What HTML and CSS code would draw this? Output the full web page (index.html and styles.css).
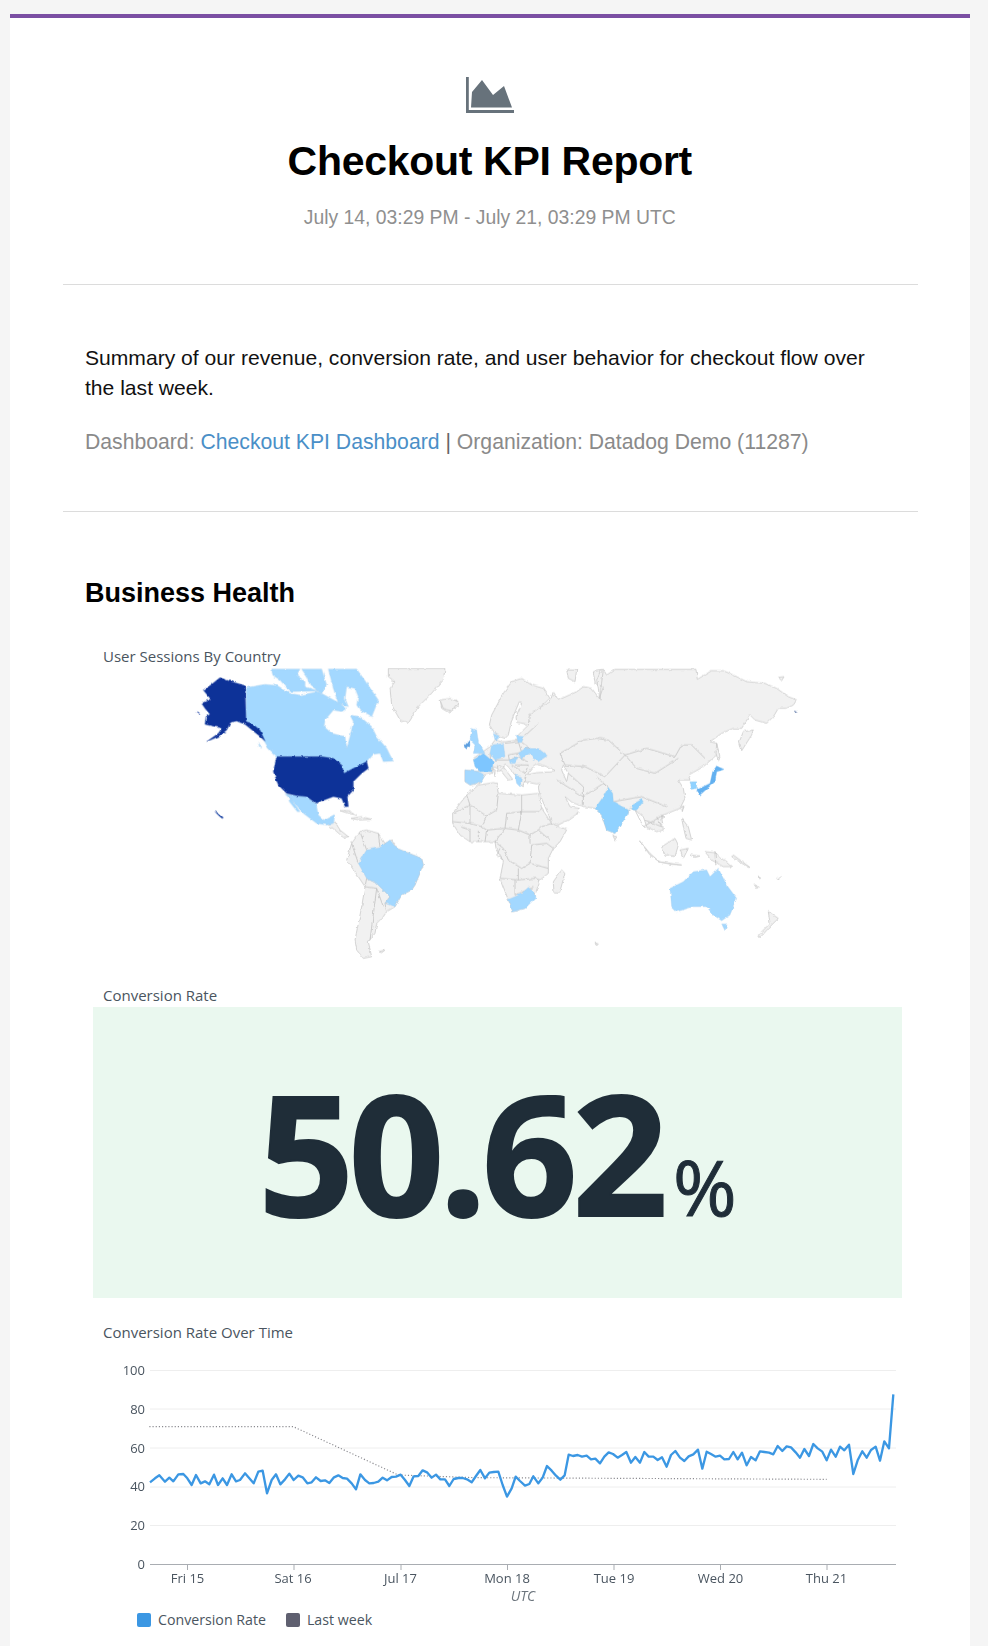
FILE: index.html
```html
<!DOCTYPE html>
<html lang="en">
<head>
<meta charset="utf-8">
<title>Checkout KPI Report</title>
<link rel="stylesheet" href="styles.css">
</head>
<body>
<main class="card">
  <header class="head">
    <svg class="logo" viewBox="0 0 48 36" aria-hidden="true">
      <path class="logo-fill" d="M5 30.500 L6 15 L16 3 L27 18 L38 9 L46 30.500 Z"/>
      <path class="logo-fill" d="M0 0 H2.800 V33 H48 V36 H0 Z"/>
    </svg>
    <h1 class="title">Checkout KPI Report</h1>
    <p class="range">July 14, 03:29 PM - July 21, 03:29 PM UTC</p>
  </header>
  <section class="intro">
    <p class="summary">Summary of our revenue, conversion rate, and user behavior for checkout flow over the last week.</p>
    <p class="meta">Dashboard: <a class="link" href="#">Checkout KPI Dashboard</a> <span class="pipe">|</span> Organization: Datadog Demo (11287)</p>
  </section>
  <section class="body">
    <h2 class="section-title">Business Health</h2>

    <h3 class="widget-title first">User Sessions By Country</h3>
    <svg class="map" viewBox="9 84 2430 876" role="img" aria-label="World map of user sessions by country">
      <defs>
        <filter id="rough" filterUnits="userSpaceOnUse" x="0" y="84" width="2440" height="880">
          <feTurbulence type="fractalNoise" baseFrequency="0.07" numOctaves="2" seed="4" result="noise"/>
          <feDisplacementMap in="SourceGraphic" in2="noise" scale="9" xChannelSelector="R" yChannelSelector="G"/>
        </filter>
      </defs>
      <g filter="url(#rough)">
      <g class="land">
        <path d="M895 85H1065L1060 120L1020 165L985 200L955 250L930 240L905 195L900 145L915 125L895 110Z"/>
        <path d="M1052 185L1075 186L1100 180L1105 200L1075 217L1055 205Z"/>
        <path d="M710 550L735 545L750 570L775 590L760 592L735 570Z"/>
        <path d="M750 512L775 512L800 525L775 520ZM780 535L815 530L845 538L810 540Z"/>
        <path d="M770 660L785 610L810 575L830 570L865 580L885 610L905 600L920 625L995 655L1000 675L975 735L965 750L935 765L915 800L890 815L880 830L860 850L855 880L835 905L845 950L820 955L800 930L795 900L815 800L825 740L805 710Z"/>
        <path d="M865 935L885 930L875 938Z"/>
      </g>
      <g class="lines">
        <path d="M785 610L805 670M810 575L830 630M865 580L870 622M885 610L875 622M830 715L825 740M830 715L860 730L875 745L900 770L885 790L890 815M825 740L860 745L840 900M860 745L880 800"/>
      </g>
      <g class="c-light">
        <path d="M805 670L830 630L870 622L900 600L920 625L995 655L1000 675L975 735L965 750L935 765L915 800L885 790L900 770L875 745L860 730L830 715Z"/>
      </g>
      <g transform="translate(300 75)">
        <g class="c-light">
          <path d="M168 68L225 58L262 62L300 85L330 90L385 80L440 110L470 130L455 140L430 135L405 165L402 185L425 205L465 215L470 250L480 215L490 170L480 150L510 155L545 185L560 215L590 250L600 270L610 288L580 290L570 265L550 268L530 292L505 305L462 325L455 300L430 280L395 275L260 275L235 250L210 205L188 178L168 170Z"/>
          <path d="M245 12H330L320 30L345 50L345 65L385 78L300 80L270 45L248 30Z"/>
          <path d="M335 12H395L410 60L395 85L360 60L350 35Z"/>
          <path d="M415 12H500L520 40L565 105L545 155L510 135L500 120L505 95L495 70L470 65L465 100L475 125L445 115L430 70Z"/>
          <path d="M285 387L320 392L350 395L378 417L385 450L402 465L435 448L430 475L410 480L380 475L340 445L310 410ZM295 390L330 440L322 440L298 410Z"/>
          <path d="M205 230L215 250L208 245Z"/>
        </g>
        <g class="c-dark">
          <path d="M90 38L112 46L165 62L168 170L185 175L210 195L225 228L205 210L180 190L165 178L140 168L122 172L110 195L85 215L50 230L85 205L95 190L75 185L45 178L48 155L60 148L45 130L35 115L55 105L62 102L40 75L62 60Z"/>
          <path d="M260 275L395 275L430 280L455 300L462 325L500 305L530 290L535 310L515 325L505 335L490 350L490 375L472 395L475 425L465 425L455 400L430 395L390 410L378 415L350 395L320 392L290 385L265 360L250 320Z"/>
          <path d="M75 440L85 445L100 458L96 460L85 450ZM22 140L30 146L25 147Z"/>
        </g>
      </g>
      <g transform="translate(1050 0)">
        <g class="land">
          <path d="M148 255L155 225L190 160L215 125L245 115L275 135L310 145L330 175L302 200L280 245L265 253L230 247L228 230L245 190L238 185L215 240L205 285L195 295L180 290L165 280Z"/>
          <path d="M265 255L268 225L295 205L330 185L340 155L355 180L410 155L430 140L455 145L478 175L490 140L465 130L460 95L490 88L500 105L525 88L768 88L772 118L815 92L850 92L880 105L920 125L975 130L1010 145L1045 170L1070 180L1060 195L1040 205L1015 205L1000 230L980 250L945 240L930 225L905 265L880 265L845 280L810 305L830 310L835 340L790 380L755 400L745 405L750 420L715 420L730 445L735 475L720 505L670 525L665 530L670 570L650 575L620 560L610 530L585 510L570 505L565 515L525 580L500 570L485 525L465 505L435 500L400 490L375 470L390 500L418 505L410 522L385 540L340 562L328 530L300 465L295 440L300 430L290 432L255 425L258 405L290 398L345 395L335 385L315 378L295 372L280 380L268 395L255 415L250 440L235 432L225 405L205 380L195 372L190 380L218 418L205 420L178 387L160 380L155 400L135 405L120 430L90 435L75 425L75 390L115 395L100 355L150 320L165 300L185 305L195 305L235 300L235 285Z"/>
          <path d="M370 375L385 400L380 425L365 390Z" class="sea"/>
          <path d="M470 120L480 95L490 90L484 135L480 180L475 145Z"/>
          <path d="M380 90H410L405 125L385 115Z"/>
          <path d="M1015 112L1032 110L1025 122Z"/>
          <path d="M0 180L30 175L55 185L35 213L10 205Z"/>
          <path d="M172 375L190 385L175 395ZM160 385L170 395L165 410Z"/>
          <path d="M985 815L1015 835L990 860L960 893L955 885L990 850Z"/>
          <path d="M465 910L475 912L470 917Z"/>
        </g>
        <g transform="translate(30 420)">
          <g class="land">
            <path d="M8 100L30 70L50 45L85 15L130 8L140 10L145 40L215 45L265 40L275 85L305 130L350 150L330 185L310 205L295 235L295 280L270 300L255 345L225 385L190 395L175 360L150 295L160 245L138 205L135 185L100 185L60 185L30 165L8 130Z"/>
            <path d="M335 270L345 280L328 340L312 338L310 305Z"/>
          </g>
          <path class="borders" d="M50 45L60 75M8 100L60 75L110 108L140 90L145 40M215 45L215 95L265 95L275 85M60 75L60 130L8 125M60 130L95 140L110 108M95 140L110 150L165 145L170 100L215 95L205 150L240 165L265 150L300 180M265 150L275 140L305 130M205 150L165 145L135 185L160 205L175 240M240 190L240 165M175 240L215 265L240 250L245 195L290 190L310 205M240 250L295 265M205 265L205 300L150 295M205 300L255 295M195 300L195 345L250 322M60 185L60 150M85 185L85 150M110 150L105 185M150 205L140 225L160 240M30 140L60 150M255 295L270 300"/>
          <path class="za" d="M175 358L195 350L215 340L235 322L255 338L258 352L225 385L190 395Z"/>
        </g>
        <g transform="translate(480 270)">
          <g class="land">
            <path d="M460 0L455 15L425 62L418 35L430 5Z"/>
            <path d="M350 40L360 80L355 95L348 70Z"/>
            <path d="M245 230L252 228L247 245Z"/>
            <path d="M245 265L265 290L275 330L258 325L250 290Z"/>
            <path d="M185 350L225 325L235 345L225 380L195 375Z"/>
            <path d="M240 360L265 355L250 385Z"/>
            <path d="M315 365L345 368L395 410L370 410L335 390Z"/>
            <path d="M118 332L150 370L178 395L150 375Z"/>
            <path d="M175 395L245 405L215 403Z"/>
            <path d="M400 375L450 412L445 412L395 380ZM270 375L300 378L285 382ZM475 435L482 445L478 446ZM530 445L544 438L534 448ZM462 462L475 472L470 475Z"/>
            <path d="M38 315L50 320L45 330Z"/>
            <path d="M185 255L195 258L188 265Z"/>
          </g>
          <path class="borders" d="M-120 70L-50 30L-10 25L25 30L75 75L140 55L225 80L245 45L275 45L315 85M75 75L110 115L165 130L235 85M75 75L15 140L-45 110L-105 105L-120 70M-95 130L-50 170L-50 225M-130 150L-50 200L10 160L25 172M-10 140L20 170M105 240L130 290L190 255M130 290L150 300M135 270L185 290L170 260M40 215L125 200L200 230M345 368L347 402"/>
          <g class="c-mid">
            <path d="M25 172L38 190L40 215L85 240L85 250L45 310L20 300L5 255L-15 235L10 200Z"/>
            <path d="M95 225L125 208L130 215L110 240L100 240Z"/>
            <path d="M270 155L290 155L290 175L275 178Z"/>
          </g>
          <path class="c-japan" d="M350 108L372 118L350 125L345 155L300 195L290 180L330 160L338 125Z"/>
        </g>
        <g transform="translate(30 75)">
          <path class="borders" d="M165 235L205 230L215 262L175 270M135 285L178 285L205 275L235 290M175 270L178 285M120 265L125 320M195 300L235 300L225 325M205 230L215 215M222 215L265 175M215 232L240 250L225 250M185 300L225 325"/>
          <g class="c-light">
            <path d="M65 190L80 195L85 230L105 265L70 265L75 240L60 225Z"/>
            <path d="M45 315L85 320L105 330L95 350L60 360L45 350Z"/>
            <path d="M125 240L160 235L165 275L135 285L120 265Z"/>
            <path d="M130 205L150 215L135 225Z"/>
            <path d="M205 265L225 250L265 250L292 272L265 290L250 280L240 265L215 280Z"/>
            <path d="M178 285L205 275L195 295L180 295Z"/>
            <path d="M195 330L215 335L210 365L200 355Z"/>
            <path d="M198 212L222 215L215 232L205 232Z"/>
          </g>
          <path class="c-france" d="M70 285L100 265L130 290L125 320L90 320L75 305Z"/>
          <path class="c-ireland" d="M42 245L58 225L60 240L50 252Z"/>
        </g>
        <g class="c-light">
          <path d="M690 745L730 725L760 695L800 690L810 710L835 685L860 735L890 775L870 825L845 842L820 825L800 800L760 800L710 815L695 800Z"/>
          <path d="M845 852L862 852L855 872Z"/>
        </g>
        <path class="c-kurile" d="M1062 212L1074 215L1066 218Z"/>
      </g>
      </g>
    </svg>

    <h3 class="widget-title second">Conversion Rate</h3>
    <div class="query-value"><span class="qv-number">50.62</span><span class="qv-unit">%</span></div>

    <h3 class="widget-title third">Conversion Rate Over Time</h3>
    <svg class="chart" viewBox="0 0 809 258" role="img" aria-label="Conversion rate time series">
      <g class="grid">
        <path d="M57 18.5H803M57 57H803M57 96H803M57 135H803M57 173.5H803"/>
      </g>
      <path class="axis" d="M57 212.5H803M94.5 212.5V218M201 212.5V218M308 212.5V218M414.500 212.5V218M521 212.5V218M627.500 212.5V218M734 212.5V218"/>
      <g class="y-labels">
        <text x="52" y="23">100</text>
        <text x="52" y="62">80</text>
        <text x="52" y="101">60</text>
        <text x="52" y="139">40</text>
        <text x="52" y="178">20</text>
        <text x="52" y="217">0</text>
      </g>
      <g class="x-labels">
        <text x="94.500" y="231">Fri 15</text>
        <text x="200" y="231">Sat 16</text>
        <text x="307.500" y="231">Jul 17</text>
        <text x="414" y="231">Mon 18</text>
        <text x="521" y="231">Tue 19</text>
        <text x="627.500" y="231">Wed 20</text>
        <text x="733.500" y="231">Thu 21</text>
      </g>
      <text class="utc" x="430" y="249">UTC</text>
      <g transform="translate(-3 -32) scale(.33333)">
        <polyline class="last-week" points="178,320 610,320 925,465 1155,473 2210,478"/>
        <polyline class="series" points="180,487 195,475 208,466 225,485 238,473 250,484 265,463 280,462 292,475 305,495 318,465 332,490 345,484 358,493 372,464 384,495 398,475 411,495 425,463 438,484 450,480 465,460 478,475 491,490 505,455 518,452 531,520 545,480 558,463 571,493 585,478 598,461 611,480 625,467 638,472 652,490 665,487 678,472 692,483 705,481 718,489 732,472 745,466 758,474 771,476 785,490 798,508 811,463 825,480 838,490 851,489 865,485 878,473 891,481 905,471 918,470 932,464 945,480 958,498 971,469 985,468 998,451 1011,457 1025,473 1038,464 1051,478 1065,478 1078,498 1091,477 1105,474 1118,474 1131,478 1145,487 1158,468 1171,450 1185,475 1198,458 1211,456 1225,455 1238,495 1251,530 1265,505 1277,470 1290,483 1305,497 1318,492 1330,469 1345,490 1358,473 1371,438 1385,452 1398,467 1411,479 1424,466 1436,404 1449,408 1463,405 1476,410 1490,407 1503,418 1516,416 1530,430 1543,410 1556,397 1569,402 1583,413 1596,405 1609,396 1623,428 1636,411 1650,428 1663,396 1676,410 1690,410 1703,420 1716,412 1730,440 1743,405 1756,393 1770,413 1783,423 1796,409 1810,403 1824,389 1837,446 1850,395 1863,402 1877,410 1890,407 1903,418 1917,417 1930,396 1943,418 1956,398 1970,436 1983,411 1997,421 2010,394 2023,396 2037,398 2050,403 2063,378 2077,393 2090,379 2103,382 2117,397 2130,413 2143,387 2157,408 2170,372 2183,385 2197,395 2210,421 2223,389 2237,410 2250,380 2263,391 2277,374 2290,462 2303,421 2317,394 2330,413 2343,390 2357,380 2370,422 2383,364 2397,385 2410,223"/>
      </g>
    </svg>
    <ul class="legend">
      <li class="legend-item"><span class="swatch swatch-blue"></span>Conversion Rate</li>
      <li class="legend-item"><span class="swatch swatch-grey"></span>Last week</li>
    </ul>
  </section>
</main>
</body>
</html>
```
FILE: styles.css
```css
* { box-sizing: border-box; }
html, body { margin: 0; height: 100%; overflow: hidden; }
body {
  background: #f5f5f5;
  padding: 14px 18px 0 10px;
  font-family: "Liberation Sans", Arial, sans-serif;
  color: #000;
}
.card {
  background: #fff;
  border-top: 4px solid #7b4fa3;
  padding: 0 52px 0 53px;
  height: 1632px;
  overflow: hidden;
}
.head {
  padding: 59px 1.500px 0 0;
  text-align: center;
  height: 267px;
  border-bottom: 1px solid #dcdcdc;
}
.logo { display: block; width: 48px; height: 36px; margin: 0 auto; }
.logo-fill { fill: #67727b; }
.title {
  margin: 24px 0 0;
  font-size: 41px;
  line-height: 48px;
  font-weight: 700;
  letter-spacing: -.3px;
}
.range {
  margin: 19px 0 0;
  font-size: 19.350px;
  line-height: 26px;
  color: #8f8f8f;
}
.intro {
  height: 227px;
  padding: 58px 22px 0;
  border-bottom: 1px solid #dcdcdc;
}
.summary { margin: 0; font-size: 21.100px; line-height: 30px; color: #111; }
.meta { margin: 24px 0 0; font-size: 21.200px; line-height: 30px; color: #8a8a8a; }
.link { color: #4a8fc7; text-decoration: none; }
.pipe { color: #666; }
.body { padding: 0 0 0 22px; }
.section-title {
  margin: 64px 0 0;
  font-size: 27px;
  line-height: 34px;
  font-weight: 700;
}
.widget-title {
  margin: 0 0 0 18px;
  font-family: "Open Sans", sans-serif;
  font-size: 15px;
  line-height: 20px;
  font-weight: 400;
  color: #4a5560;
}
.widget-title.first { margin-top: 36px; }
.widget-title.second { margin-top: 25px; margin-bottom: 2px; }
.widget-title.third { margin-top: 24px; }
.map {
  display: block;
  width: 810px;
  height: 292px;
  margin: 2px 0 0 8px;
  filter: blur(.4px);
}
.land path { fill: #f1f1f1; stroke: #c6c6c6; stroke-width: 2.200; stroke-linejoin: round; }
.land path.sea { fill: #fff; }
.lines path, .borders { fill: none; stroke: #bdbdbd; stroke-width: 2.200; }
.za { fill: #a3d8ff; stroke: #a9cbe6; stroke-width: 1; }
.c-light path { fill: #a3d8ff; stroke: #a9cbe6; stroke-width: 1; }
.c-mid path { fill: #90d2ff; stroke: #9cc8e8; stroke-width: 1; }
.c-dark path { fill: #0a3098; stroke: #0a3098; stroke-width: 1; }
.c-france { fill: #7ec6ff; stroke: #9cc8e8; stroke-width: 1; }
.c-japan { fill: #62b0f0; stroke: #62b0f0; stroke-width: 1; }
.c-ireland { fill: #5b9fe0; stroke: #5b9fe0; stroke-width: 1; }
.c-kurile { fill: #33518f; }
.query-value {
  margin-left: 8px;
  width: 809px;
  height: 291px;
  background: #eaf8ef;
  display: flex;
  justify-content: center;
  align-items: baseline;
  padding: 25px 0 0;
  font-family: "Open Sans", sans-serif;
  color: #1f2d38;
}
.qv-number {
  font-size: 167px;
  line-height: 240px;
  font-weight: 700;
  letter-spacing: -5px;
  -webkit-text-stroke: 2px #1f2d38;
}
.qv-unit { font-size: 77px; font-weight: 400; margin-left: 10px; -webkit-text-stroke: 1px #1f2d38; }
.chart {
  display: block;
  width: 809px;
  height: 258px;
  margin: 10px 0 0 8px;
  filter: blur(.3px);
}
.grid path { fill: none; stroke: #eeeeee; stroke-width: 1; }
.axis { fill: none; stroke: #a9adb2; stroke-width: 1; }
.y-labels text, .x-labels text {
  font-family: "Open Sans", sans-serif;
  font-size: 13px;
  fill: #4a5560;
}
.y-labels text { text-anchor: end; }
.x-labels text { text-anchor: middle; }
.utc {
  font-family: "Open Sans", sans-serif;
  font-size: 14px;
  font-style: italic;
  fill: #6c757d;
  text-anchor: middle;
}
.series { fill: none; stroke: #3b97e3; stroke-width: 7; stroke-linejoin: round; }
.last-week { fill: none; stroke: #8b8b90; stroke-width: 3.500; stroke-dasharray: 3.500 6; }
.legend {
  list-style: none;
  display: flex;
  gap: 20px;
  margin: 0 0 0 52px;
  padding: 0;
}
.legend-item {
  display: flex;
  align-items: center;
  gap: 7px;
  font-family: "Open Sans", sans-serif;
  font-size: 14.200px;
  line-height: 20px;
  color: #4a5560;
}
.swatch { width: 14px; height: 14px; border-radius: 2px; }
.swatch-blue { background: #3b97e3; }
.swatch-grey { background: #5f6070; }
```
